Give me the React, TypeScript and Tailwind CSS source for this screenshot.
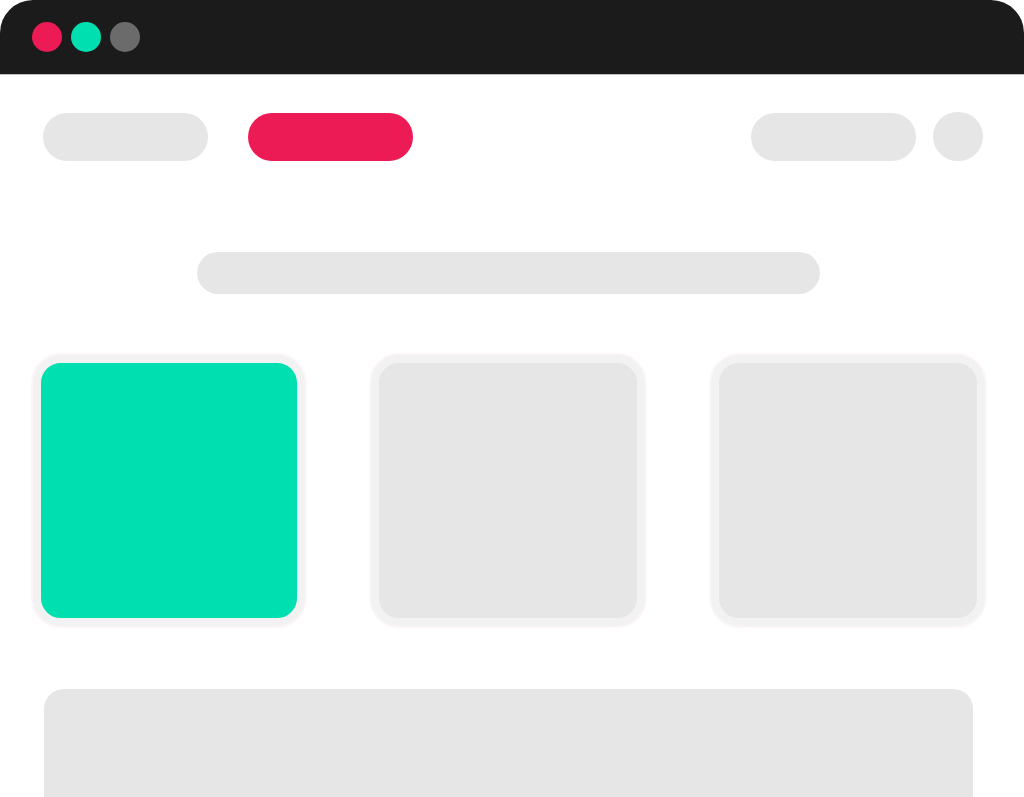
export default function App() {
  return (
    <div className="h-[797px] w-[1024px] overflow-hidden bg-white">
      <div className="flex h-[75px] items-center gap-[9px] rounded-t-[33px] border-b border-[#bdbdbd] bg-[#1b1b1b] pl-[32px]">
        <span className="h-[30px] w-[30px] rounded-full bg-[#ec1a55]" />
        <span className="h-[30px] w-[30px] rounded-full bg-[#00dfb0]" />
        <span className="h-[30px] w-[30px] rounded-full bg-[#6b6b6b]" />
      </div>

      <div className="mt-[37px] flex items-center pl-[43px] pr-[41px]">
        <div className="h-[48px] w-[165px] rounded-full bg-[#e6e6e6]" />
        <div className="ml-[40px] h-[48px] w-[165px] rounded-full bg-[#ec1a55]" />
        <div className="ml-auto h-[48px] w-[165px] rounded-full bg-[#e6e6e6]" />
        <div className="ml-[17px] h-[49px] w-[50px] rounded-full bg-[#e6e6e6]" />
      </div>

      <div className="ml-[197px] mt-[91px] h-[42px] w-[623px] rounded-full bg-[#e6e6e6]" />

      <div className="ml-[33px] mt-[61px] flex gap-[66px]">
        <div className="h-[271px] w-[272px] rounded-[28px] border-[8px] border-[#f3f2f3] bg-[#00dfb0] shadow-[0_0_0_2px_#fdf6f8]" />
        <div className="h-[271px] w-[274px] rounded-[28px] border-[8px] border-[#f3f2f3] bg-[#e6e6e6] shadow-[0_0_0_2px_#fdf6f8]" />
        <div className="h-[271px] w-[274px] rounded-[28px] border-[8px] border-[#f3f2f3] bg-[#e6e6e6] shadow-[0_0_0_2px_#fdf6f8]" />
      </div>

      <div className="ml-[44px] mt-[63px] h-[200px] w-[929px] rounded-[20px] bg-[#e6e6e6]" />
    </div>
  );
}
